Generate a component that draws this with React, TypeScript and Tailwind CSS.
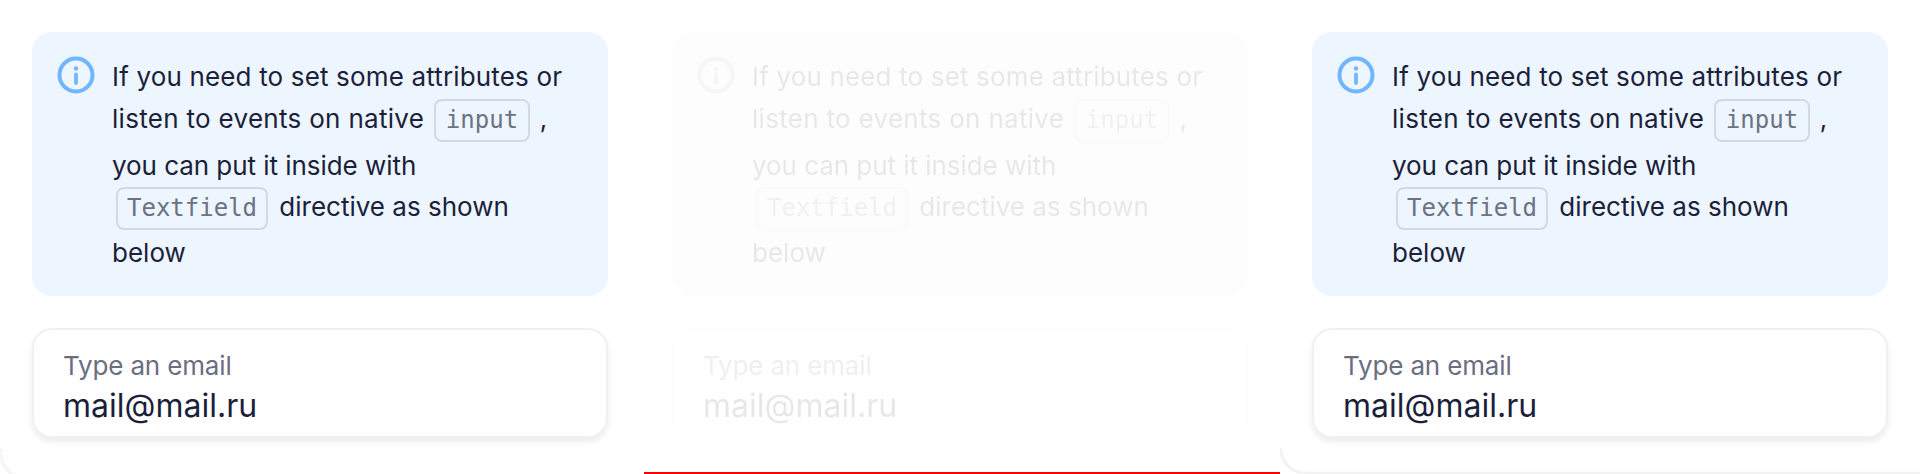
const codeCls = "inline-block rounded-lg border-2 border-[#d3d9e4] text-[#6b7280] text-[24px] leading-[39px] h-[43px] align-middle tracking-normal";
const monoStyle = { fontFamily: '"DejaVu Sans Mono", monospace' };

function Info() {
  return (
    <svg width="38" height="38" viewBox="0 0 38 38" fill="none" className="shrink-0">
      <circle cx="19" cy="19" r="16.5" stroke="#6fb6ff" strokeWidth="4" />
      <circle cx="19" cy="12.5" r="2.2" fill="#6fb6ff" />
      <path d="M19 18.5v8.5" stroke="#6fb6ff" strokeWidth="3.8" strokeLinecap="round" />
    </svg>
  );
}

function Panel({ fade }: { fade?: boolean }) {
  return (
    <div className={"flex flex-col gap-8 " + (fade ? "opacity-10 grayscale" : "")}>
      <div className="flex h-[264px] gap-[17px] rounded-[20px] bg-[#edf5fe] pl-[25px] pr-[20px] pt-[24px]">
        <Info />
        <div className="whitespace-nowrap text-[26px] leading-[41px] text-[#1b1f3b]">
          <div className="tracking-[0.16px]">If you need to set some attributes or</div>
          <div className="h-[48px] leading-[43px] tracking-[0.3px]">listen to events on native <code className={codeCls + " mx-[2px] px-[10px]"} style={monoStyle}>input</code> ,</div>
          <div className="tracking-[-0.05px]">you can put it inside with</div>
          <div className="h-[46px] leading-[41px]"><code className={codeCls + " mx-[4px] px-[9px]"} style={monoStyle}>Textfield</code> directive as shown</div>
          <div>below</div>
        </div>
      </div>
      <div className="h-[110px] rounded-[20px] bg-white pl-[31px] pt-[20px] shadow-[inset_0_0_0_2px_rgba(0,0,0,0.06),0_4px_6px_rgba(0,0,0,0.08)]">
        <div className="text-[26px] leading-[36px] tracking-[-0.15px] text-[#6b6d80]">Type an email</div>
        <div className="text-[32px] leading-[44px] text-[#1b1f3b]">mail@mail.ru</div>
      </div>
    </div>
  );
}

export default function App() {
  return (
    <div className="grid h-[474px] grid-cols-3 overflow-hidden bg-white" style={{ fontFamily: 'Inter, sans-serif' }}>
      <div className="relative px-8 pt-8">
        <Panel />
        <div className="pointer-events-none absolute -bottom-[5px] left-0 h-[30px] w-[30px] rounded-bl-[24px] shadow-[inset_2px_-2px_3px_rgba(0,0,0,0.05)]" />
      </div>
      <div className="relative">
        <div className="ml-1 h-[474px] border-b-2 border-[#ff0000] pl-7 pr-8 pt-8">
          <Panel fade />
        </div>
      </div>
      <div className="relative px-8 pt-8">
        <Panel />
        <div className="pointer-events-none absolute bottom-0 left-0 right-0 h-[26px] rounded-bl-[24px] shadow-[inset_2px_-2px_2px_rgba(0,0,0,0.06)]" />
      </div>
    </div>
  );
}
